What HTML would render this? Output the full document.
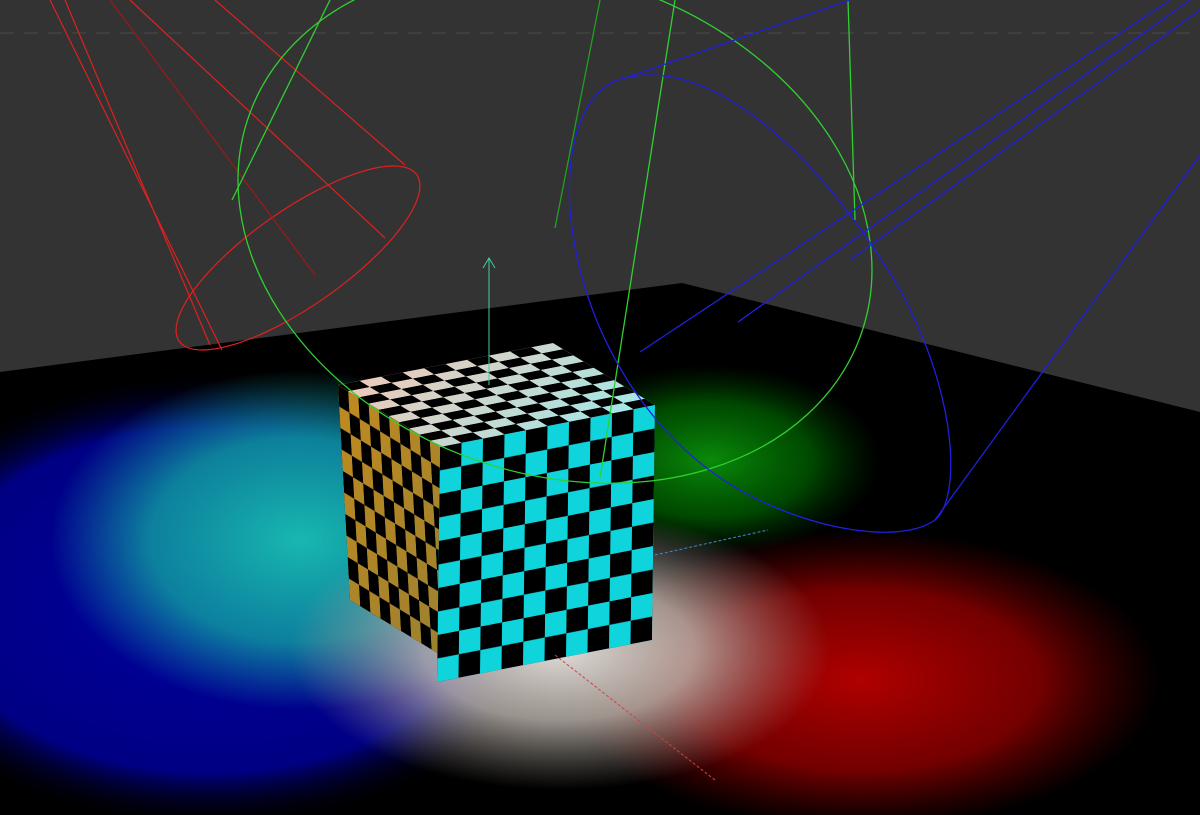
<!DOCTYPE html>
<html><head><style>html,body{margin:0;padding:0;background:#333;width:1200px;height:815px;overflow:hidden}</style></head>
<body>
<svg width="1200" height="815" viewBox="0 0 1200 815" xmlns="http://www.w3.org/2000/svg">
<defs>
<pattern id="chk" patternUnits="userSpaceOnUse" width="0.2" height="0.2">
<rect x="0" y="0" width="0.1" height="0.1" fill="#000"/>
<rect x="0.1" y="0.1" width="0.1" height="0.1" fill="#000"/>
</pattern>
<radialGradient id="gb" cx="0.5" cy="0.5" r="0.5"><stop offset="0" stop-color="#0000a0"/><stop offset="0.75" stop-color="#00008a" stop-opacity="0.95"/><stop offset="1" stop-color="#000" stop-opacity="0"/></radialGradient>
<radialGradient id="gc" cx="0.5" cy="0.5" r="0.5"><stop offset="0" stop-color="#18b8b0"/><stop offset="0.6" stop-color="#10a0a0" stop-opacity="0.8"/><stop offset="1" stop-color="#10a0a0" stop-opacity="0"/></radialGradient>
<radialGradient id="gr" cx="0.5" cy="0.5" r="0.5"><stop offset="0" stop-color="#b00000"/><stop offset="0.6" stop-color="#880000" stop-opacity="0.85"/><stop offset="1" stop-color="#600" stop-opacity="0"/></radialGradient>
<radialGradient id="gg" cx="0.5" cy="0.5" r="0.5"><stop offset="0" stop-color="#0a8a0a"/><stop offset="0.6" stop-color="#006800" stop-opacity="0.7"/><stop offset="1" stop-color="#004000" stop-opacity="0"/></radialGradient>
<radialGradient id="gw" cx="0.5" cy="0.5" r="0.5"><stop offset="0" stop-color="#e0dcd8"/><stop offset="0.5" stop-color="#c0b8b0" stop-opacity="0.8"/><stop offset="1" stop-color="#a09890" stop-opacity="0"/></radialGradient>
<linearGradient id="gt" x1="0" y1="0" x2="1" y2="1"><stop offset="0" stop-color="#f0c8b8"/><stop offset="1" stop-color="#a0e8e8"/></linearGradient>
<linearGradient id="gl" x1="0" y1="0" x2="1" y2="1"><stop offset="0" stop-color="#c08a20"/><stop offset="1" stop-color="#9a8030"/></linearGradient>
</defs>
<rect width="1200" height="815" fill="#333"/>
<line x1="0" y1="33" x2="1200" y2="33" stroke="#4a4a4a" stroke-dasharray="14,10"/>
<polygon points="0,372 682,283 1200,412 1200,815 0,815" fill="#000"/>
<g>
<ellipse cx="210" cy="600" rx="360" ry="230" fill="url(#gb)"/>
<ellipse cx="710" cy="460" rx="170" ry="95" fill="url(#gg)"/>
<ellipse cx="860" cy="680" rx="300" ry="150" fill="url(#gr)"/>
<ellipse cx="300" cy="540" rx="250" ry="170" fill="url(#gc)"/>
<ellipse cx="560" cy="650" rx="270" ry="140" fill="url(#gw)"/>
</g>
<g transform="matrix(102,62,12,215,338,385)"><rect width="1" height="1" fill="url(#gl)"/><rect width="1" height="1" fill="url(#chk)"/></g>
<g transform="matrix(215,-42,-3,235,440,447)"><rect width="1" height="1" fill="#10d4dc"/><rect width="1" height="1" fill="url(#chk)"/></g>
<g transform="matrix(215,-42,102,62,338,385)"><rect width="1" height="1" fill="url(#gt)"/><rect width="1" height="1" fill="url(#chk)"/></g>
<line x1="489" y1="258" x2="489" y2="385" stroke="#4c9" stroke-width="1"/>
<polyline points="483,268 489,258 495,268" fill="none" stroke="#4c9"/>
<line x1="655" y1="555" x2="768" y2="530" stroke="#48c" stroke-dasharray="3,2"/>
<line x1="555" y1="655" x2="715" y2="780" stroke="#c44" stroke-dasharray="3,2"/>
<g fill="none" stroke="#e02020" stroke-width="1.2">
<ellipse cx="298" cy="258" rx="145" ry="48" transform="rotate(-35 298 258)"/>
<line x1="50" y1="0" x2="222" y2="350"/><line x1="65" y1="0" x2="210" y2="345"/>
<line x1="130" y1="0" x2="385" y2="238"/><line x1="110" y1="0" x2="315" y2="275" stroke="#a01818"/>
<line x1="215" y1="0" x2="405" y2="165"/>
</g>
<g fill="none" stroke="#30d030" stroke-width="1.3">
<ellipse cx="555" cy="225" rx="325" ry="248" transform="rotate(20 555 225)"/>
<line x1="232" y1="200" x2="330" y2="0"/>
<line x1="600" y1="478" x2="675" y2="0"/>
<line x1="848" y1="0" x2="855" y2="220"/>
<line x1="555" y1="228" x2="600" y2="0" stroke="#20a020"/>
</g>
<g fill="none" stroke="#2020e0" stroke-width="1.3">
<path d="M625,78 C720,55 830,170 900,290 C960,400 960,500 935,520 C900,545 810,530 740,490 C650,440 580,330 570,210 C565,130 590,85 625,78 Z"/>
<line x1="625" y1="78" x2="850" y2="0"/>
<line x1="935" y1="520" x2="1200" y2="155"/>
<line x1="640" y1="352" x2="1170" y2="0"/>
<line x1="738" y1="322" x2="1190" y2="0"/>
<line x1="850" y1="260" x2="1200" y2="10"/>
</g>
</svg>
</body></html>
